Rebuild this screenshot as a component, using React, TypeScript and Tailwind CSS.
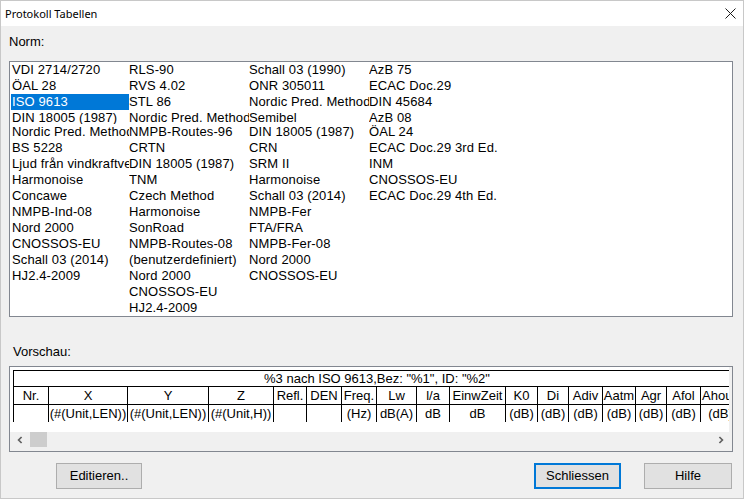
const NORM_COLUMNS: string[][] = [
  ["VDI 2714/2720", "ÖAL 28", "ISO 9613", "DIN 18005 (1987)", "Nordic Pred. Method", "BS 5228", "Ljud från vindkraftverk", "Harmonoise", "Concawe", "NMPB-Ind-08", "Nord 2000", "CNOSSOS-EU", "Schall 03 (2014)", "HJ2.4-2009"],
  ["RLS-90", "RVS 4.02", "STL 86", "Nordic Pred. Method", "NMPB-Routes-96", "CRTN", "DIN 18005 (1987)", "TNM", "Czech Method", "Harmonoise", "SonRoad", "NMPB-Routes-08", "(benutzerdefiniert)", "Nord 2000", "CNOSSOS-EU", "HJ2.4-2009"],
  ["Schall 03 (1990)", "ONR 305011", "Nordic Pred. Method", "Semibel", "DIN 18005 (1987)", "CRN", "SRM II", "Harmonoise", "Schall 03 (2014)", "NMPB-Fer", "FTA/FRA", "NMPB-Fer-08", "Nord 2000", "CNOSSOS-EU"],
  ["AzB 75", "ECAC Doc.29", "DIN 45684", "AzB 08", "ÖAL 24", "ECAC Doc.29 3rd Ed.", "INM", "CNOSSOS-EU", "ECAC Doc.29 4th Ed."],
];

const COLUMN_CLASSES = ["ml-px w-[118px]", "w-[120px]", "w-[120px]", "flex-1"];

const TABLE_COLS = [
  { head: "Nr.", unit: "", w: "w-[35px]" },
  { head: "X", unit: "(#(Unit,LEN))", w: "w-[79px]" },
  { head: "Y", unit: "(#(Unit,LEN))", w: "w-[81px]" },
  { head: "Z", unit: "(#(Unit,H))", w: "w-[65px]" },
  { head: "Refl.", unit: "", w: "w-[33px]" },
  { head: "DEN", unit: "", w: "w-[35px]" },
  { head: "Freq.", unit: "(Hz)", w: "w-[35px]" },
  { head: "Lw", unit: "dB(A)", w: "w-[40px]" },
  { head: "l/a", unit: "dB", w: "w-[33px]" },
  { head: "EinwZeit", unit: "dB", w: "w-[56px]" },
  { head: "K0", unit: "(dB)", w: "w-[32px]" },
  { head: "Di", unit: "(dB)", w: "w-[31px]" },
  { head: "Adiv", unit: "(dB)", w: "w-[34px]" },
  { head: "Aatm", unit: "(dB)", w: "w-[33px]" },
  { head: "Agr", unit: "(dB)", w: "w-[31px]" },
  { head: "Afol", unit: "(dB)", w: "w-[34px]" },
  { head: "Ahous", unit: "(dB)", w: "w-[40px]" },
];

function Chevron({ dir }: { dir: "left" | "right" }) {
  return (
    <svg width="6" height="8" viewBox="0 0 6 8" fill="none">
      <path d={dir === "left" ? "M4.6 1L1.6 4L4.6 7" : "M1.4 1L4.4 4L1.4 7"} stroke="#606060" strokeWidth="1.7" />
    </svg>
  );
}

export default function App() {
  return (
    <div className="w-[746px] h-[501px] bg-white font-['Liberation_Sans',Arial,sans-serif] text-black">
      <div className="w-[744px] h-[499px] border border-[#c8c8c8] flex flex-col">
        {/* title bar */}
        <div className="h-[25px] shrink-0 bg-white flex">
          <span className="pl-[4px] pt-[5px] font-['Noto_Sans',sans-serif] text-[11px] leading-[15px]">Protokoll Tabellen</span>
          <svg className="ml-auto mr-[7px] mt-[7px]" width="11" height="11" viewBox="0 0 11 11" fill="none">
            <path d="M0.5 0.5L10.5 10.5M10.5 0.5L0.5 10.5" stroke="#1a1a1a" strokeWidth="1" />
          </svg>
        </div>

        <div className="flex-1 bg-[#f0f0f0] pl-[8px] pt-[8px] text-[13px] leading-[16px]">
          <div>Norm:</div>

          <div className="mt-[11px] w-[724px] h-[256px] border border-[#828790] bg-white flex overflow-hidden tracking-[0.12px]">
            {NORM_COLUMNS.map((col, ci) => (
              <div key={ci} className={`${COLUMN_CLASSES[ci]} shrink-0 flex flex-col`}>
                {col.map((item, ri) => {
                  const selected = ci === 0 && ri === 2;
                  return (
                    <div
                      key={ri}
                      className={`${ri === 3 ? "h-[14px]" : "h-[16px]"} ${ci === 0 ? "pl-px" : ""} ${selected ? "bg-[#0078d7] text-white" : ""} overflow-hidden whitespace-nowrap`}
                    >
                      {item}
                    </div>
                  );
                })}
              </div>
            ))}
          </div>

          <div className="mt-[27px] ml-[4px]">Vorschau:</div>

          <div className="mt-[6px] w-[724px] h-[86px] border border-[#828790] bg-[#f0f0f0] flex flex-col">
            <div className="w-[719px] h-[65px] bg-white pl-[3px] pt-[3px] overflow-hidden">
              <div className="w-[727px] h-[52px] overflow-hidden flex flex-col">
                <div className="h-[16px] shrink-0 border-t border-l border-black leading-[15px] text-center whitespace-nowrap">
                  %3 nach ISO 9613,Bez: "%1", ID: "%2"
                </div>
                <div className="h-[18px] shrink-0 flex border-t border-black leading-[17px]">
                  {TABLE_COLS.map((c) => (
                    <div key={c.head} className={`${c.w} shrink-0 border-l border-black text-center overflow-hidden whitespace-nowrap`}>
                      {c.head}
                    </div>
                  ))}
                </div>
                <div className="h-[18px] shrink-0 flex border-t border-black leading-[17px]">
                  {TABLE_COLS.map((c) => (
                    <div key={c.head} className={`${c.w} shrink-0 border-l border-black text-center overflow-hidden whitespace-nowrap`}>
                      {c.unit}
                    </div>
                  ))}
                </div>
              </div>
            </div>
            <div className="h-[19px] flex items-start">
              <div className="w-[20px] h-[15px] flex items-center justify-center">
                <Chevron dir="left" />
              </div>
              <div className="w-[17px] h-[15px] bg-[#cdcdcd]" />
              <div className="flex-1" />
              <div className="w-[17px] h-[15px] mr-[3px] flex items-center justify-center">
                <Chevron dir="right" />
              </div>
            </div>
          </div>

          <div className="mt-[11px] w-[723px] flex">
            <button className="ml-[47px] w-[86px] h-[26px] bg-[#e1e1e1] border border-[#adadad] text-[13px]">
              Editieren..
            </button>
            <button className="ml-auto w-[87px] h-[26px] bg-[#e1e1e1] border-2 border-[#0078d7] text-[13px]">
              Schliessen
            </button>
            <button className="ml-[23px] w-[88px] h-[26px] bg-[#e1e1e1] border border-[#adadad] text-[13px]">
              Hilfe
            </button>
          </div>
        </div>
      </div>
    </div>
  );
}
